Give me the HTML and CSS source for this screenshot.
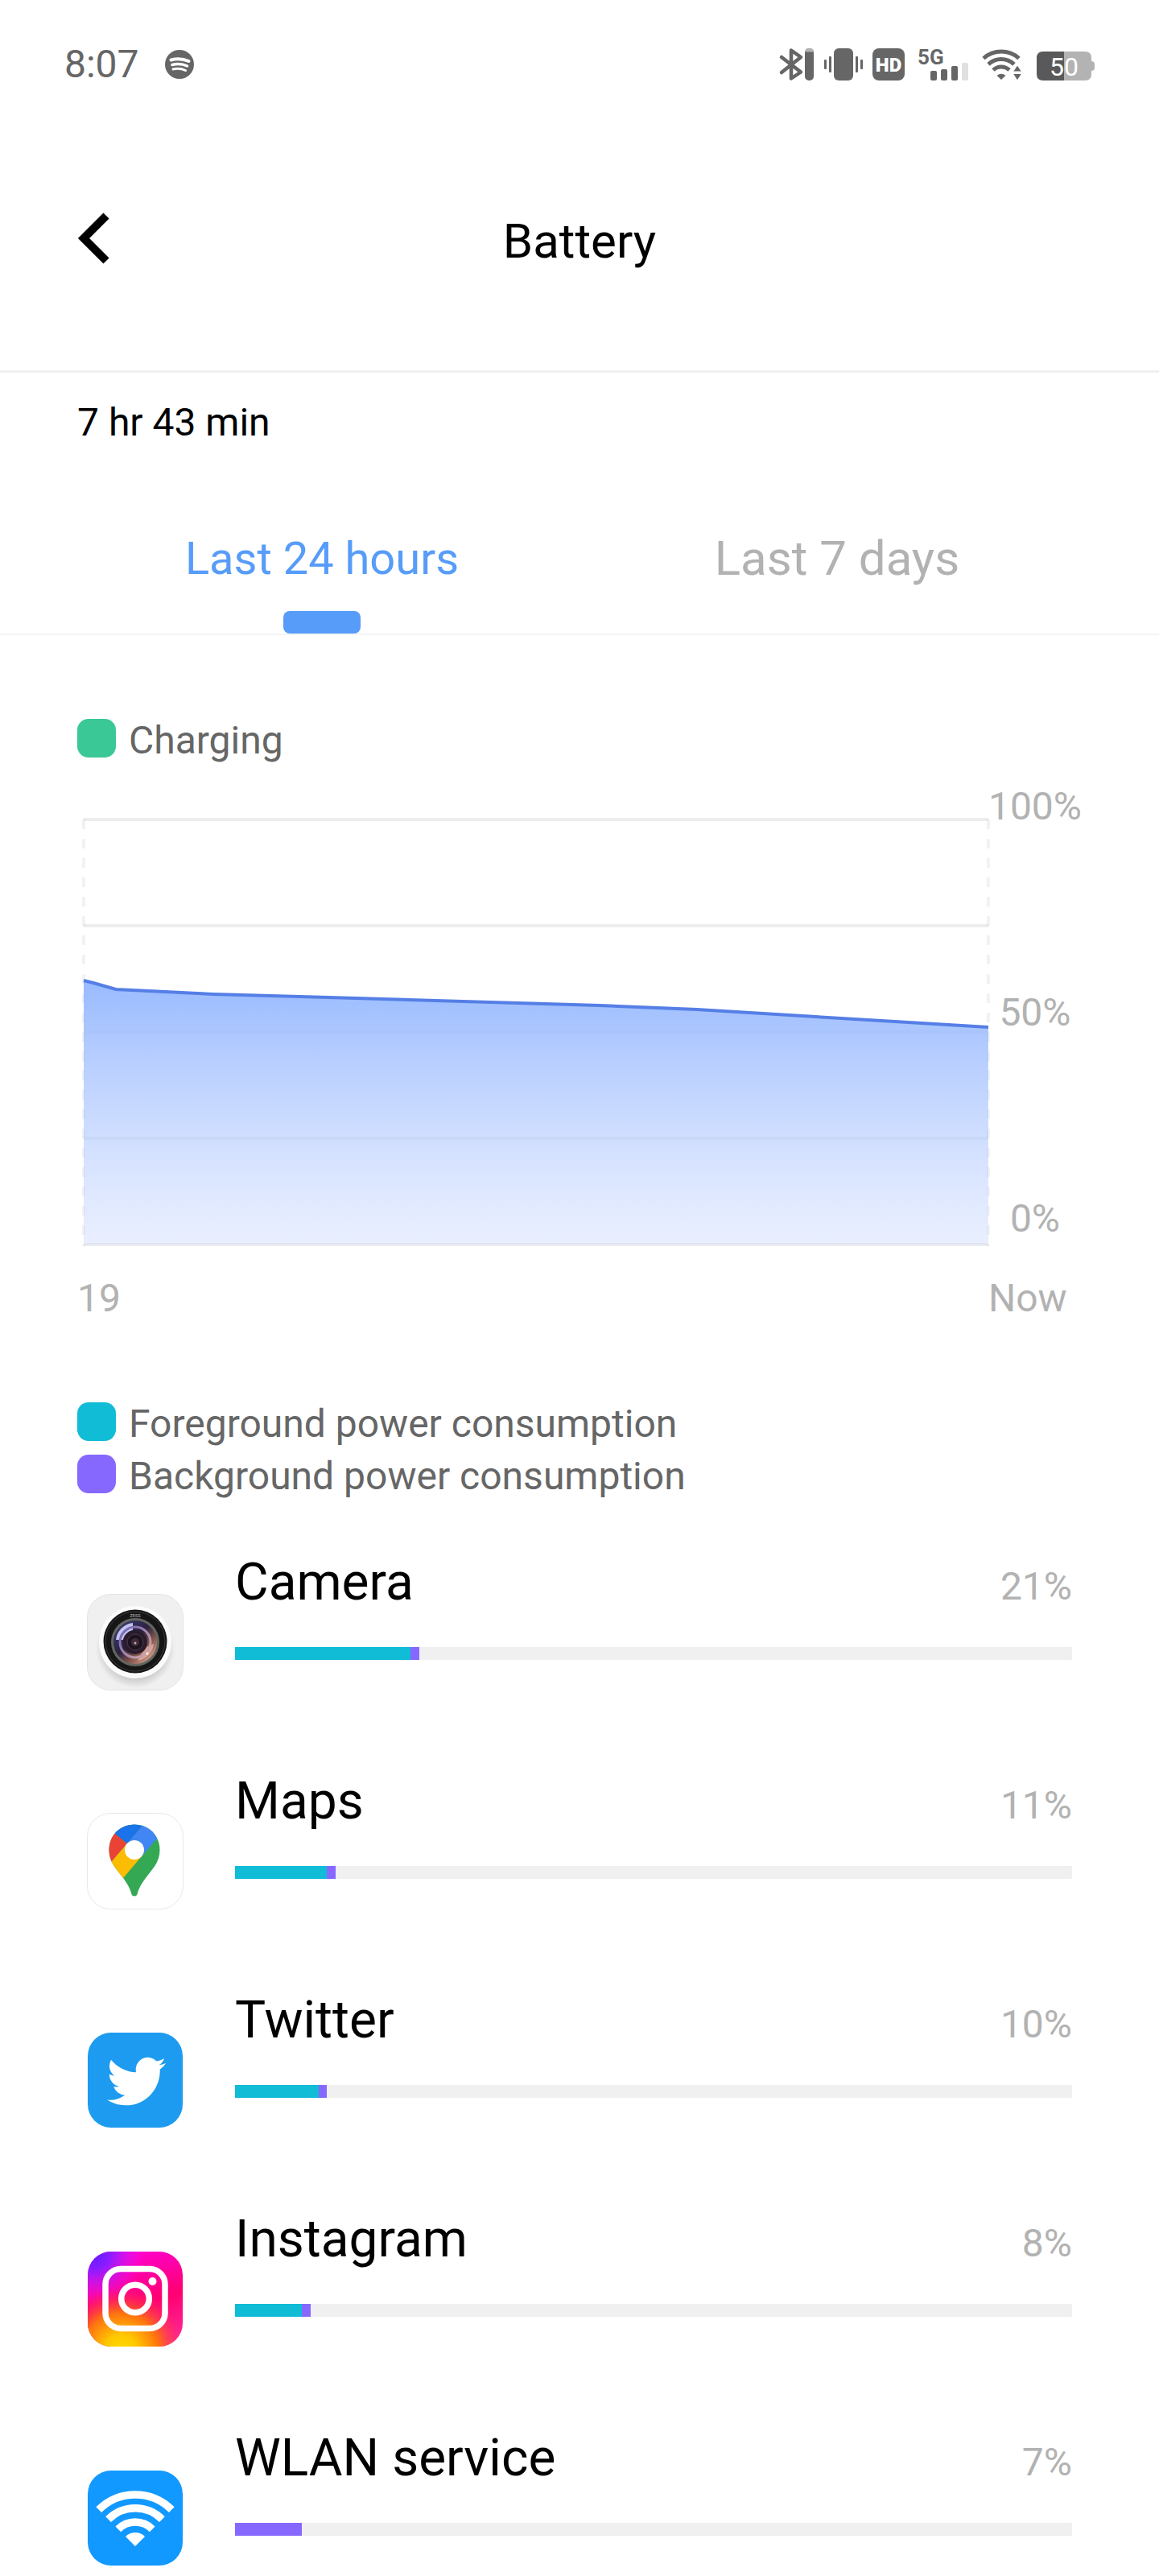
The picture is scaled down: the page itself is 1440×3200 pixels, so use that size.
FILE: index.html
```html
<!DOCTYPE html>
<html lang="en">
<head>
<meta charset="utf-8">
<meta name="viewport" content="width=device-width, initial-scale=1">
<title>Battery</title>
<link rel="stylesheet" href="styles.css">
</head>
<body>
<div class="status">
  <div class="status-left">
    <span class="clock">8:07</span>
    <svg width="36" height="36" viewBox="0 0 36 36" aria-hidden="true">
      <circle cx="18" cy="18" r="18" fill="#666"/>
      <g fill="none" stroke="#fff" stroke-linecap="round">
        <path d="M7.500 12.500Q19 9.500 29.500 14" stroke-width="4"/>
        <path d="M9 18.500Q19 16 27.500 20" stroke-width="3.500"/>
        <path d="M10 24Q18 22 25.500 25.500" stroke-width="3"/>
      </g>
    </svg>
  </div>
  <div class="status-right">
    <svg width="43" height="40" viewBox="0 0 43 40" aria-hidden="true">
      <path d="M2 11L26 29.500L14 37.500V2.500L26 11L2 30" fill="none" stroke="#666" stroke-width="4.500" stroke-linecap="round" stroke-linejoin="round"/>
      <rect x="31" width="11" height="40" rx="5" fill="#666"/>
      <path d="M31 4.500Q32 0 36.500 0Q41 0 42 4.500z" fill="#b3b3b3"/>
    </svg>
    <svg width="48" height="40" viewBox="0 0 48 40" fill="#666" aria-hidden="true">
      <rect x="12" width="24" height="40" rx="6"/>
      <rect x="6" y="10" width="3" height="20" rx="1"/>
      <rect y="14" width="3" height="12" rx="1"/>
      <rect x="39" y="10" width="3" height="20" rx="1"/>
      <rect x="45" y="14" width="3" height="12" rx="1"/>
    </svg>
    <svg width="44" height="40" viewBox="0 0 44 40" aria-hidden="true">
      <rect width="40" height="40" rx="8" fill="#666"/>
      <text x="20" y="29" class="glyph-hd">HD</text>
    </svg>
    <svg width="68" height="40" viewBox="0 0 68 40" fill="#666" aria-hidden="true">
      <text x="0" y="20" class="glyph-5g">5G</text>
      <rect x="16" y="28" width="8" height="12" rx="2"/>
      <rect x="29" y="26" width="8" height="14" rx="2"/>
      <rect x="42" y="22" width="8" height="18" rx="2"/>
      <rect x="55" y="18" width="8" height="22" rx="2" fill="#e0e0e0"/>
    </svg>
    <svg width="56" height="40" viewBox="0 0 56 40" aria-hidden="true">
      <g fill="none" stroke="#666" stroke-width="5">
        <path d="M2 12.500A33 33 0 0 1 46 12.500"/>
        <path d="M8 19.800A23.500 23.500 0 0 1 40 19.800"/>
        <path d="M14 27A14.500 14.500 0 0 1 34 27"/>
      </g>
      <path d="M24 39L18.500 33.800Q24 29.500 29.500 33.800z" fill="#666"/>
      <path d="M44 21L49.500 29H38.500zM44 40L49.500 31.500H38.500z" fill="#666" stroke="#fff" stroke-width="1"/>
    </svg>
    <svg width="72" height="40" viewBox="0 0 72 40" role="img" aria-label="Battery 50 percent">
      <path d="M34 4H60Q68 4 68 12V16Q72 16 72 20V24Q72 28 68 28V32Q68 40 60 40H34z" fill="#b3b3b3"/>
      <path d="M34 4H8Q0 4 0 12V32Q0 40 8 40H34z" fill="#595959"/>
      <text x="34" y="34" class="glyph-level">50</text>
    </svg>
  </div>
</div>

<header class="header">
  <button class="back" type="button" aria-label="Back">
    <svg width="40" height="64" viewBox="0 0 40 64" aria-hidden="true"><path d="M36 4L8 32L36 60" fill="none" stroke="#000" stroke-width="10"/></svg>
  </button>
  <h1 class="title">Battery</h1>
</header>

<main>
  <p class="duration">7 hr 43 min</p>

  <div class="tabs" role="tablist">
    <button class="tab tab-active" type="button" role="tab" aria-selected="true">Last 24 hours<span class="tab-mark"></span></button>
    <button class="tab" type="button" role="tab" aria-selected="false">Last 7 days</button>
  </div>

  <section class="usage">
    <ul class="legend">
      <li class="legend-item"><span class="swatch swatch-charging"></span>Charging</li>
    </ul>

    <div class="chart">
      <div class="plot">
        <svg class="plot-svg" viewBox="0 0 1124 528" preserveAspectRatio="none" role="img" aria-label="Battery level over the last 24 hours">
          <defs>
            <linearGradient id="level" x1="0" y1="0" x2="0" y2="1">
              <stop offset="0" stop-color="#8fb4ff" stop-opacity="0.920"/>
              <stop offset="1" stop-color="#cfdcff" stop-opacity="0.450"/>
            </linearGradient>
          </defs>
          <g class="grid-lines">
            <path d="M0 0H1124M0 132H1124M0 264H1124M0 396H1124M0 528H1124"/>
            <path class="grid-dash" d="M0 0V530M1124 0V530"/>
          </g>
          <path d="M0 200L12 203L40 211L161 217L304 221L641 231L762 236L1008 251L1124 258V528H0z" fill="url(#level)"/>
          <path class="level-line" d="M0 200L12 203L40 211L161 217L304 221L641 231L762 236L1008 251L1124 258"/>
        </svg>
      </div>
      <div class="axis-y"><span>100%</span><span>50%</span><span>0%</span></div>
      <span class="axis-x">19</span>
      <span class="axis-x">Now</span>
    </div>

    <ul class="legend">
      <li class="legend-item"><span class="swatch swatch-fg"></span>Foreground power consumption</li>
      <li class="legend-item"><span class="swatch swatch-bg"></span>Background power consumption</li>
    </ul>
  </section>

  <ul class="apps">
    <li class="app">
      <svg class="app-icon" viewBox="0 0 120 120" aria-hidden="true">
        <defs>
          <linearGradient id="cam-lens" x1="0.100" y1="0.100" x2="0.850" y2="0.900">
            <stop offset="0" stop-color="#3b3a70"/><stop offset="0.450" stop-color="#2a2240"/><stop offset="0.700" stop-color="#7a5048"/><stop offset="1" stop-color="#d09a88"/>
          </linearGradient>
          <linearGradient id="cam-ring" x1="0" y1="0" x2="1" y2="1">
            <stop offset="0" stop-color="#6a63b8"/><stop offset="1" stop-color="#d9aaa2"/>
          </linearGradient>
          <radialGradient id="cam-shadow" cx="0.500" cy="0.500" r="0.500">
            <stop offset="0.700" stop-color="#c4c4c4"/><stop offset="1" stop-color="#f0f0f0"/>
          </radialGradient>
        </defs>
        <rect x="0.500" y="0.500" width="119" height="119" rx="29" fill="#f0f0f0" stroke="#e4e4e4"/>
        <circle cx="60" cy="68" r="49" fill="url(#cam-shadow)"/>
        <circle cx="60" cy="60" r="45" fill="#fbfbfb"/>
        <circle cx="60" cy="59" r="39.500" fill="#161616"/>
        <circle cx="60" cy="59" r="37" fill="none" stroke="#444" stroke-width="0.800"/>
        <circle cx="60" cy="60" r="30" fill="#63665f"/>
        <circle cx="60" cy="60" r="27" fill="url(#cam-lens)"/>
        <path d="M36 57A24 24 0 0 1 57 36V45A15 15 0 0 0 45 57z" fill="#c3c4ee"/>
        <path d="M83 62A24 24 0 0 1 63 83L68 74A16 16 0 0 0 74 66z" fill="#e3b2a2" opacity="0.800"/>
        <circle cx="60" cy="60" r="19" fill="none" stroke="url(#cam-ring)" stroke-width="3"/>
        <circle cx="60" cy="60" r="15" fill="#2a1c2c"/>
        <circle cx="60" cy="60" r="10" fill="#1c1420" stroke="#4b3a4a"/>
        <circle cx="60" cy="60" r="5" fill="#3f2c38"/>
        <circle cx="60" cy="61" r="1.500" fill="#c9a7a2"/>
        <circle cx="75" cy="74" r="1.500" fill="#fff"/>
        <text x="60" y="29" class="glyph-lens">ZEISS</text>
      </svg>
      <div class="app-body">
        <div class="app-head"><span class="app-name">Camera</span><span class="app-share">21%</span></div>
        <div class="bar"><span class="bar-fg" style="width:21%"></span><span class="bar-bg" style="width:1%"></span></div>
      </div>
    </li>
    <li class="app">
      <svg class="app-icon" viewBox="0 0 120 120" aria-hidden="true">
        <defs>
          <clipPath id="pin"><path d="M59 14.500C77 14.500 90.500 28 90.500 46C90.500 60 83 68 76 77C69 86 65 92 62.500 101Q61.800 103.500 59 103.500Q56.200 103.500 55.500 101C53 92 49 86 42 77C35 68 27.500 60 27.500 46C27.500 28 41 14.500 59 14.500z"/></clipPath>
        </defs>
        <rect x="0.500" y="0.500" width="119" height="119" rx="29" fill="#fff" stroke="#e8e8e8"/>
        <g clip-path="url(#pin)">
          <rect width="120" height="120" fill="#34a853"/>
          <path d="M35 26L50 38L20 73L0 60V0z" fill="#ea4335"/>
          <path d="M35 26L50 38L80 3L30 0z" fill="#1a73e8"/>
          <path d="M50 38L80 3L100 17L68 54z" fill="#4285f4"/>
          <path d="M50 38L68 54L34 94L20 73z" fill="#fbbc04"/>
        </g>
        <circle cx="59" cy="46" r="12" fill="#fff"/>
      </svg>
      <div class="app-body">
        <div class="app-head"><span class="app-name">Maps</span><span class="app-share">11%</span></div>
        <div class="bar"><span class="bar-fg" style="width:11%"></span><span class="bar-bg" style="width:1%"></span></div>
      </div>
    </li>
    <li class="app">
      <svg class="app-icon" viewBox="0 0 120 120" aria-hidden="true">
        <rect x="1" y="1" width="118" height="118" rx="29" fill="#1d9bf0"/>
        <path transform="translate(25 25) scale(3.050)" fill="#fff" d="M23.953 4.570a10 10 0 01-2.825.775 4.958 4.958 0 002.163-2.723c-.951.555-2.005.959-3.127 1.184a4.920 4.920 0 00-8.384 4.482C7.690 8.095 4.067 6.130 1.640 3.162a4.822 4.822 0 00-.666 2.475c0 1.710.870 3.213 2.188 4.096a4.904 4.904 0 01-2.228-.616v.060a4.923 4.923 0 003.946 4.827 4.996 4.996 0 01-2.212.085 4.936 4.936 0 004.604 3.417 9.867 9.867 0 01-6.102 2.105c-.390 0-.779-.023-1.170-.067a13.995 13.995 0 007.557 2.209c9.053 0 13.998-7.496 13.998-13.985 0-.210 0-.420-.015-.630A9.935 9.935 0 0024 4.590z"/>
      </svg>
      <div class="app-body">
        <div class="app-head"><span class="app-name">Twitter</span><span class="app-share">10%</span></div>
        <div class="bar"><span class="bar-fg" style="width:10%"></span><span class="bar-bg" style="width:1%"></span></div>
      </div>
    </li>
    <li class="app">
      <svg class="app-icon" viewBox="0 0 120 120" aria-hidden="true">
        <defs>
          <linearGradient id="ig-base" x1="0.400" y1="0" x2="0.700" y2="1">
            <stop offset="0" stop-color="#ff00d4"/><stop offset="0.550" stop-color="#ff0070"/><stop offset="1" stop-color="#ff2a9a"/>
          </linearGradient>
          <radialGradient id="ig-violet" cx="0.050" cy="0" r="0.550">
            <stop offset="0" stop-color="#5a1cff"/><stop offset="0.350" stop-color="#8a1cff"/><stop offset="1" stop-color="#f01cff" stop-opacity="0"/>
          </radialGradient>
          <radialGradient id="ig-gold" cx="0.350" cy="1.050" r="0.680">
            <stop offset="0" stop-color="#ffdc00"/><stop offset="0.250" stop-color="#ffc800"/><stop offset="0.600" stop-color="#ff7010"/><stop offset="1" stop-color="#ff1a60" stop-opacity="0"/>
          </radialGradient>
        </defs>
        <rect x="1" y="1" width="118" height="118" rx="29" fill="url(#ig-base)"/>
        <rect x="1" y="1" width="118" height="118" rx="29" fill="url(#ig-violet)"/>
        <rect x="1" y="1" width="118" height="118" rx="29" fill="url(#ig-gold)"/>
        <g fill="none" stroke="#fff" stroke-width="7.500">
          <rect x="23" y="22.500" width="74" height="74" rx="19"/>
          <circle cx="60" cy="59.500" r="17.300"/>
        </g>
        <circle cx="81.500" cy="38" r="5" fill="#fff"/>
      </svg>
      <div class="app-body">
        <div class="app-head"><span class="app-name">Instagram</span><span class="app-share">8%</span></div>
        <div class="bar"><span class="bar-fg" style="width:8%"></span><span class="bar-bg" style="width:1%"></span></div>
      </div>
    </li>
    <li class="app">
      <svg class="app-icon" viewBox="0 0 120 120" aria-hidden="true">
        <rect x="1" y="1" width="118" height="118" rx="29" fill="#1299ff"/>
        <g fill="none" stroke="#fff" stroke-width="9.500">
          <path d="M14.700 49.700A64 64 0 0 1 105.300 49.700"/>
          <path d="M26.600 61.600A47.300 47.300 0 0 1 93.400 61.600"/>
          <path d="M38.800 73.800A30 30 0 0 1 81.200 73.800"/>
        </g>
        <path d="M60 95L48 83A17 17 0 0 1 72 83z" fill="#fff"/>
      </svg>
      <div class="app-body">
        <div class="app-head"><span class="app-name">WLAN service</span><span class="app-share">7%</span></div>
        <div class="bar"><span class="bar-bg" style="width:8%"></span></div>
      </div>
    </li>
  </ul>
</main>
</body>
</html>
```

FILE: styles.css
```css
* {
  box-sizing: border-box;
}

body {
  margin: 0;
  background: #fff;
  color: #000;
  font-family: Roboto, "Noto Sans", sans-serif;
  font-size: 48px;
}

svg {
  display: block;
  flex: none;
  overflow: visible;
}

ul {
  margin: 0;
  padding: 0;
  list-style: none;
}

button {
  padding: 0;
  border: 0;
  background: none;
  font: inherit;
  cursor: pointer;
}

/* Status bar */
.status {
  display: flex;
  align-items: center;
  justify-content: space-between;
  height: 160px;
  padding: 0 80px;
}

.status-left {
  display: flex;
  align-items: center;
  gap: 32px;
}

.status-right {
  display: flex;
  align-items: center;
  gap: 12px;
}

.clock {
  color: #666;
  line-height: 56px;
}

.glyph-hd {
  fill: #fff;
  font-size: 24px;
  font-weight: 900;
  text-anchor: middle;
}

.glyph-5g {
  font-size: 26px;
  font-weight: 700;
}

.glyph-level {
  fill: #fff;
  font-size: 32px;
  text-anchor: middle;
}

.glyph-lens {
  fill: #bbb;
  font-size: 5px;
  text-anchor: middle;
}

/* Title bar */
.header {
  display: grid;
  grid-template-columns: 1fr auto 1fr;
  align-items: start;
  padding: 100px 96px 120px;
  border-bottom: 3px solid #f0f0f0;
}

.back {
  justify-self: start;
  padding: 4px 0;
}

.title {
  margin: 0;
  font-size: 60px;
  font-weight: 400;
  line-height: 80px;
}

.duration {
  margin: 0;
  padding: 30px 96px 0;
  line-height: 64px;
}

/* Tabs */
.tabs {
  display: grid;
  grid-template-columns: 1fr 1fr;
  align-items: start;
  margin-top: 101px;
  padding: 0 80px;
  border-bottom: 2px solid #f4f4f4;
}

.tab {
  display: flex;
  flex-direction: column;
  align-items: center;
  gap: 29px;
  color: #b2b2b2;
  font-size: 60px;
  line-height: 72px;
}

.tab-active {
  color: #579cf8;
  font-size: 56px;
}

.tab-mark {
  width: 96px;
  height: 28px;
  border-radius: 8px;
  background: #579cf8;
}

/* Chart */
.usage {
  padding: 104px 96px 0;
}

.legend {
  display: grid;
  gap: 11px;
  color: #666;
}

.legend-item {
  display: flex;
  align-items: flex-start;
  gap: 16px;
  line-height: 54px;
}

.swatch {
  width: 48px;
  height: 48px;
  border-radius: 14px;
}

.swatch-charging {
  background: #39c896;
}

.swatch-fg {
  background: #10bcd6;
}

.swatch-bg {
  background: #8768ff;
}

.chart {
  display: grid;
  grid-template-columns: 1fr auto;
  margin: 27px 0 101px;
  color: #b2b2b2;
  line-height: 56px;
}

.plot {
  padding: 44px 0 0 8px;
}

.plot-svg {
  width: 100%;
  height: 528px;
}

.grid-lines {
  fill: none;
  stroke: #000;
  stroke-opacity: 0.07;
  stroke-width: 4px;
}

.grid-dash {
  stroke-dasharray: 12 12;
  stroke-opacity: 0.05;
}

.level-line {
  fill: none;
  stroke: #557fe6;
  stroke-width: 4px;
}

.axis-y {
  display: flex;
  flex-direction: column;
  align-items: center;
  justify-content: space-between;
  padding-bottom: 4px;
}

.axis-x {
  margin-top: 39px;
}

/* App list */
.apps {
  display: grid;
  gap: 100px;
  margin-top: 67px;
  padding: 0 108px;
}

.app {
  display: flex;
  align-items: flex-end;
  gap: 64px;
}

.app-icon {
  width: 120px;
  height: 120px;
}

.app-body {
  flex: 1;
  display: grid;
  gap: 42px;
  padding-bottom: 38px;
}

.app-head {
  display: flex;
  align-items: baseline;
  justify-content: space-between;
  line-height: 76px;
}

.app-name {
  font-size: 64px;
}

.app-share {
  color: #b2b2b2;
  line-height: 56px;
}

.bar {
  display: flex;
  height: 16px;
  background: #f0f0f0;
}

.bar-fg {
  background: #10bcd6;
}

.bar-bg {
  background: #8768ff;
}
```
